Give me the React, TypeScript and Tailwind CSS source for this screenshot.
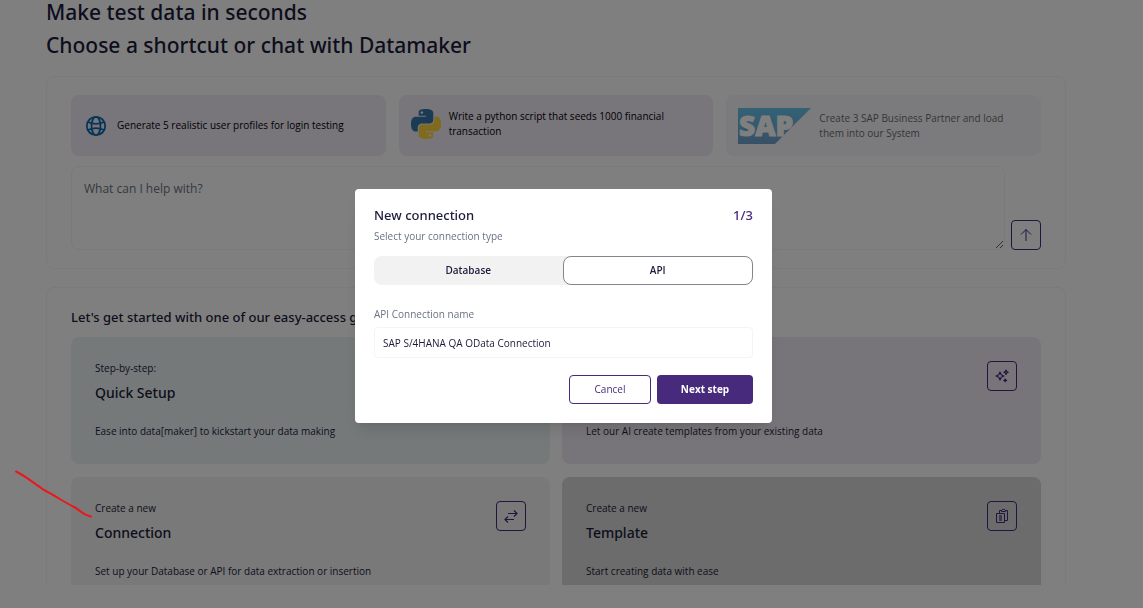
import { useState } from 'react';
import type { ReactNode } from 'react';
import clsx from 'clsx';

const iconProps = {
  viewBox: '0 0 16 16',
  width: 16,
  height: 16,
  fill: 'none',
  stroke: 'currentColor',
  strokeWidth: 1,
  'aria-hidden': true,
} as const;

function ArrowUpIcon() {
  return (
    <svg {...iconProps}>
      <path d="M8 14V2.500M3 7.500l5-5 5 5" />
    </svg>
  );
}

function SwapIcon() {
  return (
    <svg {...iconProps} strokeWidth="1.2">
      <path d="M5 5.500h9M11 2.500l3 3-3 3M11 11.500H2M5 8.500l-3 3 3 3" />
    </svg>
  );
}

function SparklesIcon() {
  return (
    <svg {...iconProps} strokeWidth="1.2" strokeLinejoin="round">
      <path d="M6 4l1.200 2.800L10 8l-2.800 1.200L6 12l-1.200-2.800L2 8l2.800-1.200z" />
      <path d="M12 2l.7 1.500 1.500.7-1.500.7-.7 1.500-.7-1.500-1.500-.7 1.500-.7z" />
      <path d="M11.200 11l.4 1 1 .4-1 .4-.4 1-.4-1-1-.4 1-.4z" />
    </svg>
  );
}

function ClipboardIcon() {
  return (
    <svg {...iconProps}>
      <path d="M2.500 5.500h8v9h-8z" />
      <path d="M5.500 5.500v-3h2M11.500 2.500h2v10h-3" />
      <path d="M7.500 3.500v-1c0-1.500 4-1.500 4 0v1z" />
      <path d="M6.500 7v6" strokeWidth="3" strokeOpacity="0.6" />
    </svg>
  );
}

function GlobeIcon() {
  return (
    <svg viewBox="0 0 22 22" className="size-[22px] shrink-0 text-[#0f6bb0]" fill="none" stroke="currentColor" strokeWidth="1.8" aria-hidden>
      <circle cx="11" cy="11" r="9.200" />
      <ellipse cx="11" cy="11" rx="4.500" ry="9.200" />
      <path d="M2.800 7c5 2.300 11.400 2.300 16.400 0M2.800 15c5-2.300 11.400-2.300 16.400 0" />
    </svg>
  );
}

function PythonIcon() {
  return (
    <svg viewBox="0 0 24 24" className="size-[30px] shrink-0" aria-hidden>
      <path
        fill="#3776ab"
        d="M14.25.18l.9.2.73.26.59.3.45.32.34.34.25.34.16.33.1.3.04.26.02.2-.01.13V8.5l-.05.63-.13.55-.21.46-.26.38-.3.31-.33.25-.35.19-.35.14-.33.1-.3.07-.26.04-.21.02H8.77l-.69.05-.59.14-.5.22-.41.27-.33.32-.27.35-.2.36-.15.37-.1.35-.07.32-.04.27-.02.21v3.06H3.17l-.21-.03-.28-.07-.32-.12-.35-.18-.36-.26-.36-.36-.35-.46-.32-.59-.28-.73-.21-.88-.14-1.05-.05-1.23.06-1.22.16-1.04.24-.87.32-.71.36-.57.4-.44.42-.33.42-.24.4-.16.36-.1.32-.05.24-.01h.16l.06.01h8.16v-.83H6.18l-.01-2.75-.02-.37.05-.34.11-.31.17-.28.25-.26.31-.23.38-.2.44-.18.51-.15.58-.12.64-.1.71-.06.77-.04.84-.02 1.27.05zm-6.3 1.98l-.23.33-.08.41.08.41.23.34.33.22.41.09.41-.09.33-.22.23-.34.08-.41-.08-.41-.23-.33-.33-.22-.41-.09-.41.09z"
      />
      <path
        fill="#ffd43b"
        d="M21.04 6.11l.28.06.32.12.35.18.36.27.36.35.35.47.32.59.28.73.21.88.14 1.04.05 1.23-.06 1.23-.16 1.04-.24.86-.32.71-.36.57-.4.45-.42.33-.42.24-.4.16-.36.09-.32.05-.24.02-.16-.01h-8.22v.82h5.84l.01 2.76.02.36-.05.34-.11.31-.17.29-.25.25-.31.24-.38.2-.44.17-.51.15-.58.13-.64.09-.71.07-.77.04-.84.01-1.27-.04-1.07-.14-.9-.2-.73-.25-.59-.3-.45-.33-.34-.34-.25-.34-.16-.33-.1-.3-.04-.25-.02-.2.01-.13v-5.34l.05-.64.13-.54.21-.46.26-.38.3-.32.33-.24.35-.2.35-.14.33-.1.3-.06.26-.04.21-.02.13-.01h5.84l.69-.05.59-.14.5-.21.41-.28.33-.32.27-.35.2-.36.15-.36.1-.35.07-.32.04-.28.02-.21V6.07h2.09l.14.01zm-6.47 14.25l-.23.33-.08.41.08.41.23.33.33.23.41.08.41-.08.33-.23.23-.33.08-.41-.08-.41-.23-.33-.33-.23-.41-.08-.41.08z"
      />
    </svg>
  );
}

function SapLogo() {
  return (
    <svg viewBox="0 0 73 36" className="h-9 w-[73px] shrink-0" aria-hidden>
      <defs>
        <linearGradient id="sap" x1="0" y1="0" x2="0" y2="1">
          <stop offset="0" stopColor="#009fdb" />
          <stop offset="1" stopColor="#0f63ad" />
        </linearGradient>
      </defs>
      <path d="M0 0h73L37 36H0z" fill="url(#sap)" />
      <text x="1" y="28" fill="#fff" stroke="#fff" strokeWidth="1" fontFamily="Open Sans" fontWeight="800" fontSize="28">
        SAP
      </text>
    </svg>
  );
}

interface PromptCardProps {
  icon: ReactNode;
  text: string;
  className: string;
  disabled?: boolean;
}

function PromptCard({ icon, text, className, disabled }: PromptCardProps) {
  return (
    <button
      type="button"
      disabled={disabled}
      className={clsx('flex h-[61px] items-center rounded-lg text-left text-[10px] leading-[15px]', className)}
    >
      {icon}
      <span>{text}</span>
    </button>
  );
}

interface GuideCardProps {
  label: string;
  title: string;
  text: string;
  className: string;
  icon?: ReactNode;
}

function GuideCard({ label, title, text, className, icon }: GuideCardProps) {
  return (
    <article className={clsx('flex h-[127px] items-start justify-between rounded-lg p-6', className)}>
      <div>
        <p className="text-[10px] leading-[15px] font-medium">{label}</p>
        <h3 className="mt-1 font-['Noto_Sans',sans-serif] text-sm leading-[26px] font-medium">{title}</h3>
        <p className="mt-[18px] text-[10px] leading-[15px]">{text}</p>
      </div>
      {icon && (
        <button
          type="button"
          aria-label={title}
          className="flex size-[30px] items-center justify-center rounded border border-[#472a7c] text-[#472a7c]"
        >
          {icon}
        </button>
      )}
    </article>
  );
}

function ConnectionDialog() {
  const [type, setType] = useState('API');
  const [name, setName] = useState('SAP S/4HANA QA OData Connection');

  return (
    <div className="fixed inset-0 flex items-center justify-center bg-black/50 pt-1 pr-4">
      <div role="dialog" aria-labelledby="dialog-title" className="w-[417px] rounded bg-white px-[19px] pt-[18px] pb-[19px] shadow-lg">
        <div className="flex items-center justify-between font-['Noto_Sans',sans-serif] leading-4 font-medium">
          <h2 id="dialog-title" className="text-[13px]">New connection</h2>
          <span className="text-[13px] text-[#472a7c]">1/3</span>
        </div>
        <p className="mt-1 text-[10px] leading-[18px] text-gray-500">Select your connection type</p>

        <div role="tablist" className="mt-[11px] flex rounded-lg bg-[#f2f2f2]">
          {['Database', 'API'].map((item) => (
            <button
              key={item}
              type="button"
              role="tab"
              aria-selected={type === item}
              onClick={() => setType(item)}
              className={clsx(
                'h-[29px] flex-1 rounded-lg text-[10px] font-semibold',
                type === item && 'border border-[#85858d] bg-white',
              )}
            >
              {item}
            </button>
          ))}
        </div>

        <label htmlFor="connection-name" className="mt-5 block text-[10px] leading-[18px] text-gray-500">
          API Connection name
        </label>
        <input
          id="connection-name"
          value={name}
          onChange={(e) => setName(e.target.value)}
          className="mt-1 h-[31px] w-full rounded border border-gray-100 px-2 text-[10px]"
        />

        <div className="mt-[17px] flex justify-end gap-1.5 text-[10px]">
          <button type="button" className="h-[29px] w-[82px] rounded border border-[#472a7c] font-medium text-[#472a7c]">
            Cancel
          </button>
          <button type="button" className="h-[29px] w-24 rounded bg-[#472a7c] font-bold text-white">
            Next step
          </button>
        </div>
      </div>
    </div>
  );
}

export default function App() {
  return (
    <div className="h-screen overflow-hidden bg-white pb-[23px] font-['Open_Sans','Noto_Sans',sans-serif] text-[#1c1b3a]">
      <main className="h-full overflow-hidden pr-[77px] pl-[46px]">
        <h1 className="-mt-1 font-['Noto_Sans',sans-serif] text-[21px] leading-[33px] font-medium">
          Make test data in seconds
          <br />
          Choose a shortcut or chat with Datamaker
        </h1>

        <section className="mt-3.5 rounded-lg border border-gray-100 px-6 py-[18px]">
          <div className="grid grid-cols-3 gap-[13px]">
            <PromptCard
              icon={<GlobeIcon />}
              text="Generate 5 realistic user profiles for login testing"
              className="gap-2.5 bg-[#f1ebf7] px-3.5 text-black"
            />
            <PromptCard
              icon={<PythonIcon />}
              text="Write a python script that seeds 1000 financial transaction"
              className="gap-2 bg-[#f1ebf7] pr-8 pb-1 pl-3 text-black"
            />
            <PromptCard
              icon={<SapLogo />}
              text="Create 3 SAP Business Partner and load them into our System"
              className="gap-2 bg-[#f1f0f7] pr-6 pl-3 text-black opacity-60"
              disabled
            />
          </div>
          <div className="mt-2.5 flex items-end gap-1.5">
            <textarea
              aria-label="Prompt"
              placeholder="What can I help with?"
              className="block h-[84px] min-w-0 flex-1 rounded-lg border border-gray-100 px-3 py-3 text-xs leading-5 placeholder:text-gray-500"
            />
            <button
              type="button"
              aria-label="Send"
              className="flex size-[30px] items-center justify-center rounded border border-[#472a7c] text-[#472a7c]"
            >
              <ArrowUpIcon />
            </button>
          </div>
        </section>

        <section className="mt-[18px] rounded-lg border border-gray-100 px-6 py-[19px]">
          <h2 className="font-['Noto_Sans',sans-serif] text-[13px] leading-5 font-medium">
            Let's get started with one of our easy-access guides
          </h2>
          <div className="mt-2.5 grid grid-cols-2 gap-x-3 gap-y-[13px]">
            <GuideCard
              label="Step-by-step:"
              title="Quick Setup"
              text="Ease into data[maker] to kickstart your data making"
              className="bg-[#ebf3f3]"
            />
            <GuideCard
              label="Create with AI"
              title="AI Templates"
              text="Let our AI create templates from your existing data"
              className="bg-[#f1ebf4]"
              icon={<SparklesIcon />}
            />
            <GuideCard
              label="Create a new"
              title="Connection"
              text="Set up your Database or API for data extraction or insertion"
              className="bg-[#f2f2f2]"
              icon={<SwapIcon />}
            />
            <GuideCard
              label="Create a new"
              title="Template"
              text="Start creating data with ease"
              className="bg-[#d8d8d8]"
              icon={<ClipboardIcon />}
            />
          </div>
        </section>
      </main>

      <ConnectionDialog />

      {/* red pen stroke pointing at the connection card */}
      <svg
        viewBox="0 0 78 48"
        className="pointer-events-none absolute top-[470px] left-[14px] h-12 w-[78px]"
        fill="none"
        stroke="#e8191c"
        strokeWidth="2"
        strokeLinecap="round"
        aria-hidden
      >
        <path d="M2 1.500C10 5 21 14 30 20C40 25 50 32 60 37C66 40 69 45 77 46.500" />
      </svg>
    </div>
  );
}
